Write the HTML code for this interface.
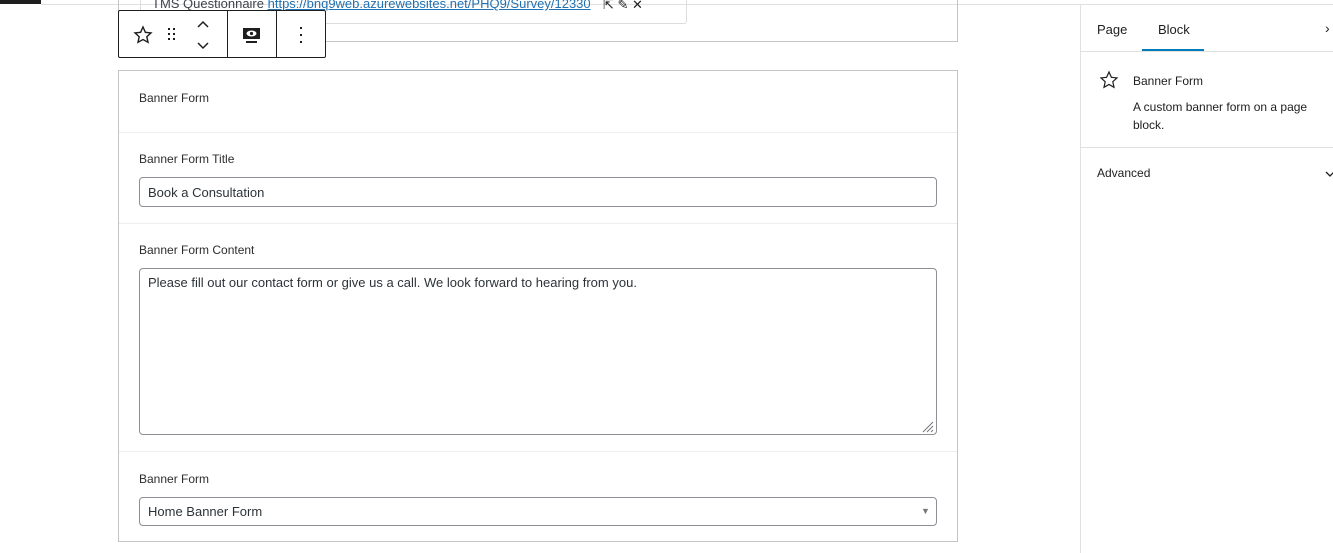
<!DOCTYPE html>
<html><head><meta charset="utf-8"><style>
*{box-sizing:border-box;margin:0;padding:0}
body{width:1333px;height:553px;background:#fff;position:relative;overflow:hidden;font-family:"Segoe UI","Liberation Sans",sans-serif;color:#1e1e1e;font-size:13px}
.a{position:absolute}
.lbl{position:absolute;left:139px;font-size:12px;color:#2c2c2c}
.inp{position:absolute;left:139px;width:798px;border:1px solid #8c8f94;border-radius:4px;font-size:13px;padding-left:8px;color:#2c3338}
.div{position:absolute;left:119px;width:838px;height:1px;background:#eceeef}
</style></head><body>
<div class="a" style="left:0;top:0;width:41px;height:4px;background:#1e1e1e"></div>
<div class="a" style="left:41px;top:4px;width:1039px;height:1px;background:#e0e0e0"></div>
<div class="a" style="left:118px;top:0;width:840px;height:42px;border:1px solid #c3c4c7;border-top:none"></div>
<div class="a" style="left:140px;top:0;width:547px;height:24px;border:1px solid #dcdcde;border-top:none;border-radius:0 0 3px 3px"></div>
<div class="a" style="left:152px;top:-4px;font-size:13px;color:#3c434a">TMS Questionnaire <span style="color:#2271b1;text-decoration:underline">https://bnq9web.azurewebsites.net/PHQ9/Survey/12330</span></div>
<div class="a" style="left:603px;top:-3px;font-size:13px">⇱ ✎ ✕</div>
<!-- toolbar -->
<div class="a" style="left:118px;top:10px;width:208px;height:48px;border:1px solid #1e1e1e;border-radius:2px;background:#fff">
 <div class="a" style="left:108px;top:0;width:1px;height:46px;background:#1e1e1e"></div>
 <div class="a" style="left:157px;top:0;width:1px;height:46px;background:#1e1e1e"></div>
 <svg class="a" style="left:14px;top:14px" width="20" height="20" viewBox="0 0 20 20"><path d="M10 2l2.4 5.3 5.6.6-4.2 3.8 1.2 5.6L10 14.5l-5 2.8 1.2-5.6L2 7.9l5.6-.6z" fill="none" stroke="#1e1e1e" stroke-width="1.4"/></svg>
 <svg class="a" style="left:48px;top:17px" width="10" height="14"><g fill="#1e1e1e"><rect x="1" y="0" width="2" height="2"/><rect x="6" y="0" width="2" height="2"/><rect x="1" y="5" width="2" height="2"/><rect x="6" y="5" width="2" height="2"/><rect x="1" y="10" width="2" height="2"/><rect x="6" y="10" width="2" height="2"/></g></svg>
 <svg class="a" style="left:77px;top:9px" width="14" height="30"><path d="M2 7l5-5 5 5M2 23l5 5 5-5" fill="none" stroke="#1e1e1e" stroke-width="1.5"/></svg>
 <svg class="a" style="left:123px;top:16px" width="20" height="18"><rect x="1" y="1" width="17" height="11" fill="#1e1e1e"/><ellipse cx="9.5" cy="6.5" rx="5" ry="3" fill="#fff"/><circle cx="9.5" cy="6.5" r="1.6" fill="#1e1e1e"/><rect x="4" y="14" width="11" height="2" fill="#1e1e1e"/></svg>
 <svg class="a" style="left:180px;top:15px" width="4" height="18"><g fill="#1e1e1e"><rect x="1" y="1" width="2" height="2"/><rect x="1" y="8" width="2" height="2"/><rect x="1" y="15" width="2" height="2"/></g></svg>
</div>
<!-- main block -->
<div class="a" style="left:118px;top:70px;width:840px;height:472px;border:1px solid #c3c4c7"></div>
<div class="lbl" style="top:91px">Banner Form</div>
<div class="div" style="top:132px"></div>
<div class="lbl" style="top:152px">Banner Form Title</div>
<div class="inp" style="top:177px;height:30px;line-height:29px">Book a Consultation</div>
<div class="div" style="top:223px"></div>
<div class="lbl" style="top:243px">Banner Form Content</div>
<div class="inp" style="top:268px;height:167px;padding-top:6px">Please fill out our contact form or give us a call. We look forward to hearing from you.</div>
<svg class="a" style="left:921px;top:420px" width="13" height="13"><path d="M12 2L2 12M12 6L6 12M12 10L10 12" stroke="#777" stroke-width="1"/></svg>
<div class="div" style="top:451px"></div>
<div class="lbl" style="top:472px">Banner Form</div>
<div class="inp" style="top:497px;height:29px;line-height:28px">Home Banner Form</div>
<div class="a" style="left:921px;top:506px;font-size:9px;color:#777">▼</div>
<!-- sidebar -->
<div class="a" style="left:1080px;top:4px;width:1px;height:549px;background:#e0e0e0"></div>
<div class="a" style="left:1080px;top:4px;width:253px;height:1px;background:#e0e0e0"></div>
<div class="a" style="left:1097px;top:22px;font-size:13px">Page</div>
<div class="a" style="left:1158px;top:22px;font-size:13px">Block</div>
<div class="a" style="left:1142px;top:49px;width:62px;height:2px;background:#007cba"></div>
<div class="a" style="left:1081px;top:51px;width:252px;height:1px;background:#e0e0e0"></div>
<div class="a" style="left:1325px;top:20px;font-size:14px">›</div>
<svg class="a" style="left:1099px;top:70px" width="20" height="20" viewBox="0 0 20 20"><path d="M10 2l2.4 5.3 5.6.6-4.2 3.8 1.2 5.6L10 14.5l-5 2.8 1.2-5.6L2 7.9l5.6-.6z" fill="none" stroke="#1e1e1e" stroke-width="1.2"/></svg>
<div class="a" style="left:1133px;top:74px;font-size:12px">Banner Form</div>
<div class="a" style="left:1133px;top:98px;font-size:12px;line-height:18px;width:200px">A custom banner form on a page block.</div>
<div class="a" style="left:1081px;top:147px;width:252px;height:1px;background:#e0e0e0"></div>
<div class="a" style="left:1097px;top:166px;font-size:12px">Advanced</div>
<svg class="a" style="left:1325px;top:170px" width="8" height="8"><path d="M1 2l4 4 4-4" fill="none" stroke="#1e1e1e" stroke-width="1.3"/></svg>
</body></html>
